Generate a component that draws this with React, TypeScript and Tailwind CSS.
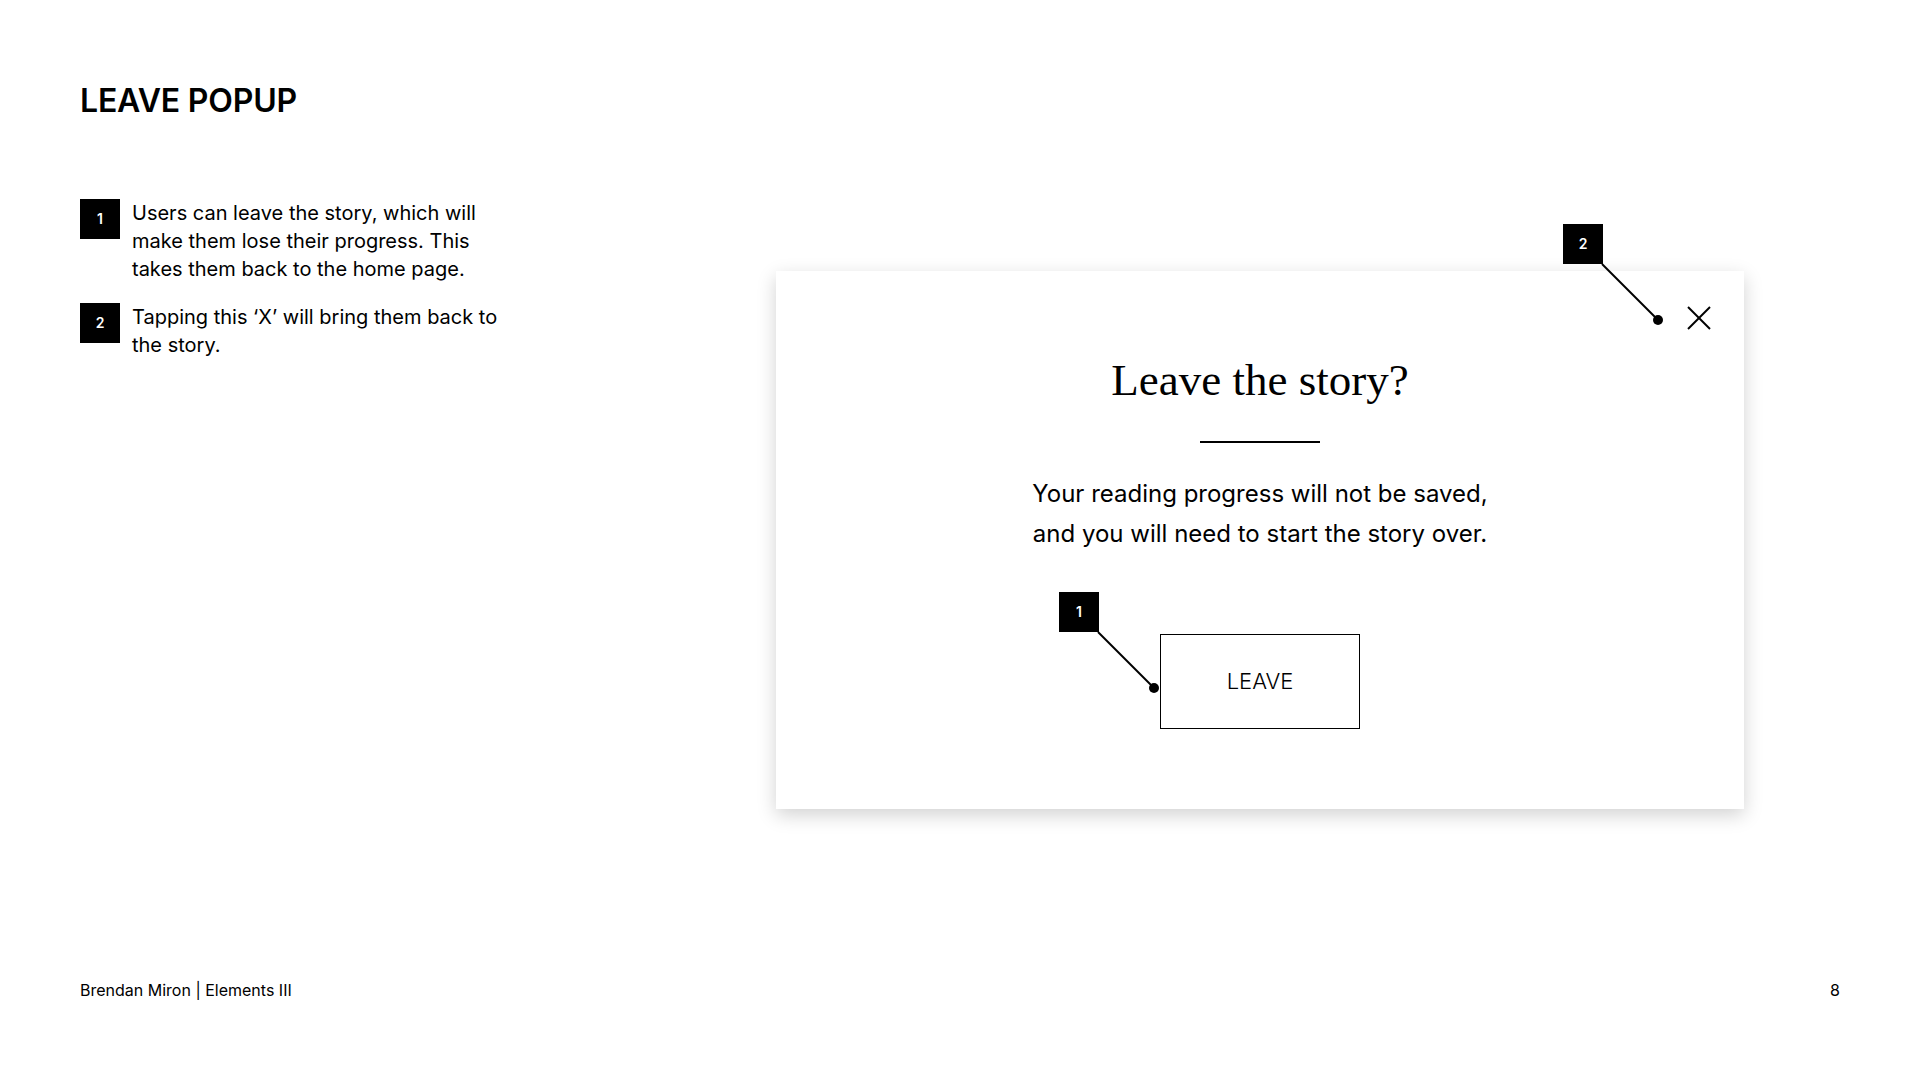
const notes = [
  {
    n: '1',
    lines: ['Users can leave the story, which will', 'make them lose their progress. This', 'takes them back to the home page.'],
  },
  {
    n: '2',
    lines: ['Tapping this \u2018X\u2019 will bring them back to', 'the story.'],
  },
];

function Marker({ n, className }: { n: string; className?: string }) {
  return (
    <div
      className={`w-10 h-10 bg-black text-white flex items-center justify-center text-sm font-semibold shrink-0 ${className ?? ''}`}
    >
      {n}
    </div>
  );
}

export default function App() {
  return (
    <div className="w-[1920px] h-[1080px] bg-white text-black flex flex-col px-20 font-['Inter','Liberation_Sans',sans-serif] overflow-hidden">
      {/* Header */}
      <h1 className="pt-[85px] text-[32px] leading-none font-semibold tracking-[-0.2px]">LEAVE POPUP</h1>

      <div className="flex items-start mt-[82px]">
        {/* Notes */}
        <div className="w-[696px] shrink-0 flex flex-col gap-5">
          {notes.map(note => (
            <div key={note.n} className="flex gap-3">
              <Marker n={note.n} />
              <p className="text-[20px] leading-7">
                {note.lines.map((l, i) => (
                  <span key={i} className="block">
                    {l}
                  </span>
                ))}
              </p>
            </div>
          ))}
        </div>

        {/* Popup */}
        <div className="relative mt-[72px] w-[968px] shrink-0 bg-white shadow-[0_6px_18px_rgba(0,0,0,0.18)]">
          <div className="flex flex-col items-center pt-[87px] pb-20">
            <h2 className="font-['Liberation_Serif',serif] text-[45px] leading-none font-normal">Leave the story?</h2>
            <div className="mt-[38px] w-[120px] h-[2px] bg-black" />
            <p className="mt-[31px] text-[24px] leading-[40px] text-center">
              Your reading progress will not be saved,
              <br />
              and you will need to start the story over.
            </p>
            <button className="mt-20 w-[200px] h-[95px] border border-black flex items-center justify-center text-[22px] font-light">
              LEAVE
            </button>
          </div>

          {/* close */}
          <button className="absolute top-[35px] right-[33px] w-6 h-6 flex items-center justify-center">
            <svg width="24" height="24" viewBox="0 0 24 24" fill="none" stroke="black" strokeWidth="2">
              <line x1="1" y1="1" x2="23" y2="23" />
              <line x1="23" y1="1" x2="1" y2="23" />
            </svg>
          </button>

          {/* annotations */}
          <svg className="absolute left-0 top-0 w-full h-full overflow-visible pointer-events-none">
            <line x1="826" y1="-7" x2="882" y2="49" stroke="black" strokeWidth="2" />
            <circle cx="882" cy="49" r="5" fill="black" />
            <line x1="322" y1="361" x2="378" y2="417" stroke="black" strokeWidth="2" />
            <circle cx="378" cy="417" r="5" fill="black" />
          </svg>
          <Marker n="2" className="absolute left-[787px] top-[-47px]" />
          <Marker n="1" className="absolute left-[283px] top-[321px]" />
        </div>
      </div>

      {/* Footer */}
      <footer className="mt-auto pb-[78px] flex justify-between text-base leading-6">
        <span>Brendan Miron | Elements III</span>
        <span>8</span>
      </footer>
    </div>
  );
}
